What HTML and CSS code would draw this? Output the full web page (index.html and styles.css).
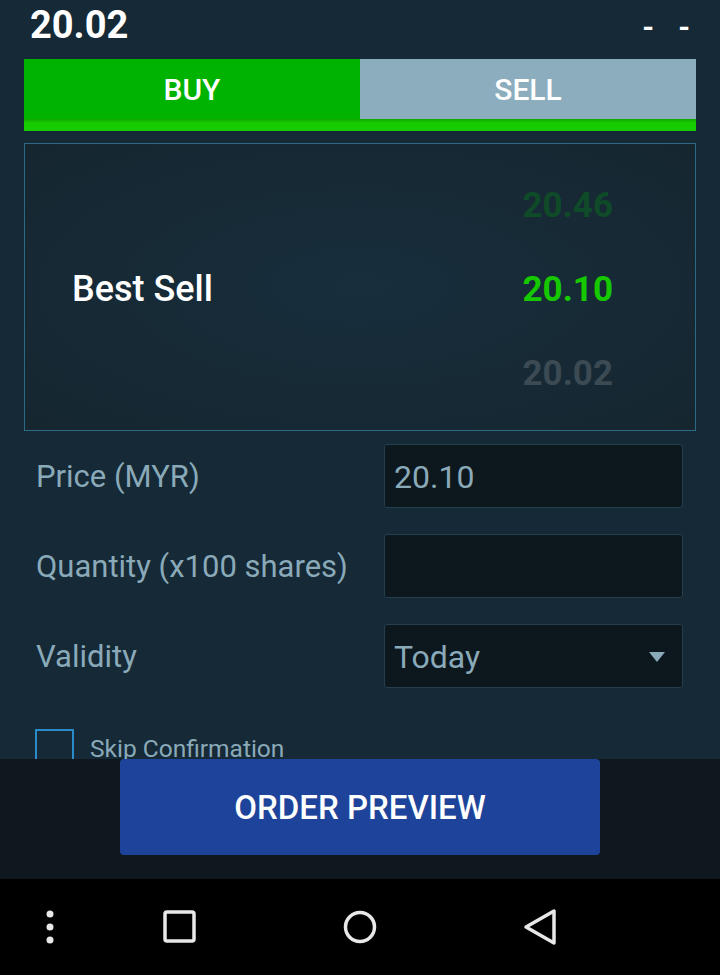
FILE: index.html
```html
<!DOCTYPE html>
<html>
<head>
    <meta charset="UTF-8">
    <title>Order</title>
    <link rel="stylesheet" href="styles.css">
</head>
<body>
<div id="app">
    <div class="scroll">
        <div class="head">
            <span class="last">20.02</span>
            <span class="change"><b>-</b><b>-</b></span>
        </div>
        <div class="tabs">
            <div class="tab buy">BUY</div>
            <div class="tab sell">SELL</div>
        </div>
        <div class="tab-line"></div>
        <div class="book">
            <div class="book-row">
                <span class="book-label"></span>
                <span class="book-price up">20.46</span>
            </div>
            <div class="book-row">
                <span class="book-label">Best Sell</span>
                <span class="book-price now">20.10</span>
            </div>
            <div class="book-row">
                <span class="book-label"></span>
                <span class="book-price down">20.02</span>
            </div>
        </div>
        <ul class="form">
            <li>
                <label>Price (MYR)</label>
                <div class="field">20.10</div>
            </li>
            <li>
                <label>Quantity (x100 shares)</label>
                <div class="field"></div>
            </li>
            <li>
                <label>Validity</label>
                <div class="field select">Today<span class="caret"></span></div>
            </li>
        </ul>
        <div class="skip">
            <span class="check"></span>
            <span class="skip-text">Skip Confirmation</span>
        </div>
    </div>
    <div class="footer">
        <button id="preview">ORDER PREVIEW</button>
    </div>
    <div class="nav">
        <svg width="12" height="40" viewBox="0 0 12 40">
            <circle cx="6" cy="7" r="3.5" fill="#e8e8e8"/>
            <circle cx="6" cy="20" r="3.5" fill="#e8e8e8"/>
            <circle cx="6" cy="33" r="3.5" fill="#e8e8e8"/>
        </svg>
        <svg width="40" height="40" viewBox="0 0 40 40">
            <rect x="5" y="5" width="29" height="29" rx="2" fill="none" stroke="#e8e8e8" stroke-width="3.5"/>
        </svg>
        <svg width="40" height="40" viewBox="0 0 40 40">
            <circle cx="20" cy="20" r="14.5" fill="none" stroke="#e8e8e8" stroke-width="3.5"/>
        </svg>
        <svg width="40" height="40" viewBox="0 0 40 40">
            <path d="M34 4 L34 36 L6 20 Z" fill="none" stroke="#e8e8e8" stroke-width="3.5" stroke-linejoin="round"/>
        </svg>
    </div>
</div>
</body>
</html>
```

FILE: styles.css
```css
*{margin:0;padding:0;box-sizing:border-box;font-family: Roboto, "Liberation Sans", sans-serif;}
li{list-style: none;}
body{background:#000;}
#app{
    width: 720px;
    height: 975px;
    display: flex;
    flex-direction: column;
    background: #152936;
}
.scroll{
    height: 759px;
    overflow: hidden;
}
.head{
    height: 59px;
    display: flex;
    justify-content: space-between;
    align-items: flex-start;
    padding: 0 30px 0 30px;
}
.head .last{
    font-size: 38px;
    font-weight: 700;
    color: #fff;
    line-height: 50px;
}
.head .change{
    display: flex;
    gap: 24px;
    padding-top: 12px;
}
.head .change b{
    font-size: 30px;
    font-weight: 700;
    line-height: 30px;
    color: #fff;
}
.tabs{
    display: flex;
    margin: 0 24px;
    height: 60px;
}
.tab{
    flex: 1;
    text-align: center;
    line-height: 62px;
    font-size: 30px;
    font-weight: 500;
    color: #fff;
}
.tab.buy{background: #00b300;}
.tab.sell{background: #8badbd;}
.tab-line{
    margin: 0 24px;
    height: 12px;
    background: linear-gradient(#0fa800, #16cc00 4px);
}
.book{
    margin: 12px 24px 0;
    height: 288px;
    border: 1px solid #2c6985;
    background: radial-gradient(ellipse at 50% 50%, #182e3d 0%, #15262f 100%);
    padding: 19px 0 14px;
}
.book-row{
    height: 84px;
    display: flex;
    align-items: center;
    justify-content: space-between;
    padding: 0 82px 0 47px;
}
.book-label{
    font-size: 36px;
    font-weight: 500;
    color: #fff;
}
.book-price{
    font-size: 35px;
    font-weight: 700;
}
.book-price.up{color: #0f4b28;}
.book-price.now{color: #16c800;}
.book-price.down{color: #3b4a53;}
.form{
    padding: 13px 37px 0 36px;
}
.form li{
    display: flex;
    justify-content: space-between;
    align-items: center;
    height: 64px;
    margin-bottom: 26px;
}
.form label{
    font-size: 31px;
    color: #8aa9b9;
}
.field{
    width: 299px;
    height: 64px;
    background: #0d171e;
    border: 1px solid #243f4d;
    border-radius: 3px;
    padding: 0 9px;
    font-size: 32px;
    line-height: 64px;
    color: #8aa9b9;
    position: relative;
}
.caret{
    position: absolute;
    right: 17px;
    top: 27px;
    width: 0;
    height: 0;
    border-left: 8px solid transparent;
    border-right: 8px solid transparent;
    border-top: 10px solid #8aa9b9;
}
.skip{
    display: flex;
    align-items: flex-start;
    gap: 16px;
    padding: 15px 0 0 35px;
}
.skip .check{
    width: 39px;
    height: 39px;
    border: 2px solid #2a8bcb;
}
.skip .skip-text{
    font-size: 24.5px;
    color: #8aa9b9;
    line-height: 40px;
}
.footer{
    height: 120px;
    background: #0f181e;
}
#preview{
    display: block;
    width: 480px;
    height: 96px;
    margin: 0 auto;
    background: #1e439a;
    border: none;
    border-radius: 4px;
    font-size: 33px;
    font-weight: 500;
    color: #fff;
    cursor: pointer;
}
.nav{
    height: 96px;
    background: #000;
    display: flex;
    align-items: center;
    padding: 0 0 0 44px;
}
.nav svg:nth-child(1){margin-right: 104px;}
.nav svg:nth-child(2){margin-right: 140px;}
.nav svg:nth-child(3){margin-right: 140px;}
```
